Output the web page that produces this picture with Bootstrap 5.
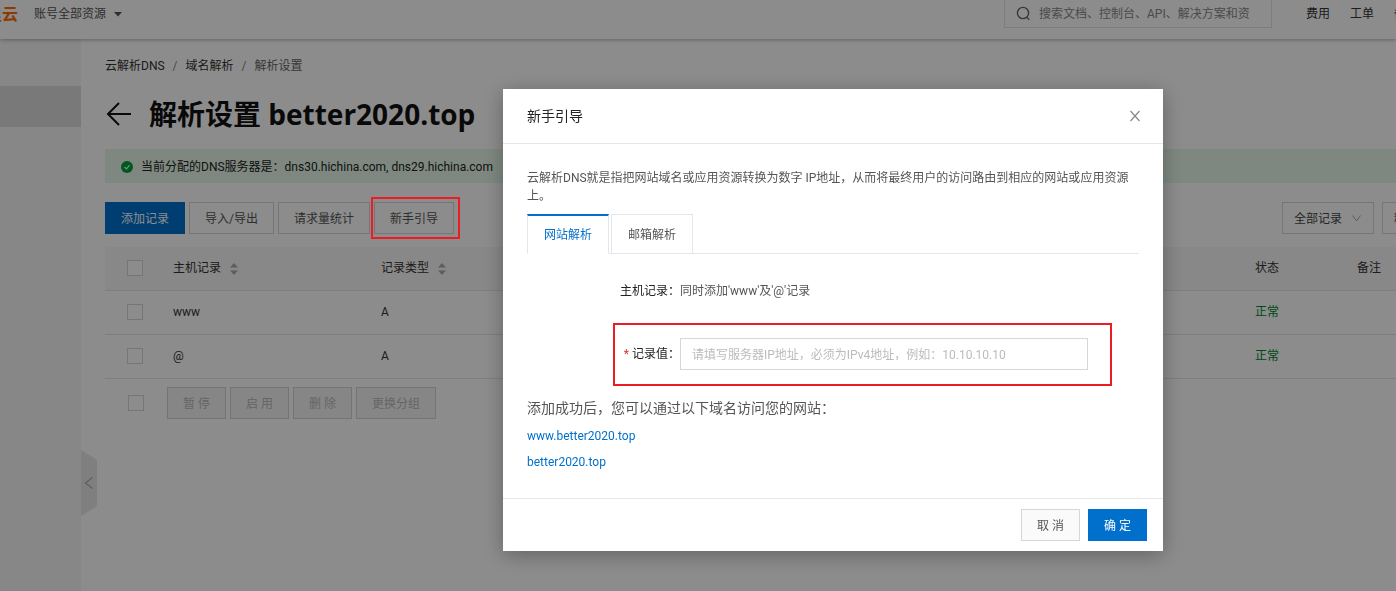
<!DOCTYPE html>
<html lang="zh-CN">
<head>
<meta charset="utf-8">
<meta name="viewport" content="width=device-width, initial-scale=1">
<title>解析设置 - 云解析DNS</title>
<link href="https://cdn.jsdelivr.net/npm/bootstrap@5.3.0/dist/css/bootstrap.min.css" rel="stylesheet">
<style>
  :root { --blue: #0070cc; --line: #e3e7ec; --edge: #d7d7d7; --frame: #ed1c24; }
  body { font-family: Roboto, "Noto Sans CJK SC", sans-serif; font-size: 12px; line-height: 18px; color: #333; overflow: hidden; }
  a { color: inherit; text-decoration: none; }

  .topbar { height: 39px; padding-bottom: 11px; box-shadow: 0 1px 4px rgba(0,0,0,.3); position: relative; z-index: 1; white-space: nowrap; }
  .brand { width: 18px; height: 27px; color: #ff6a00; font-size: 16px; line-height: 27px; font-weight: 700; overflow: hidden; }
  .account { color: #555; }
  .top-right { flex: 0 0 392px; overflow: hidden; }
  .searchbox { width: 268px; height: 28px; border: 1px solid #e4e4e4; border-top: 0; padding: 0 11px; }
  .searchbox input { border: 0; outline: 0; background: none; padding: 0; width: 100%; min-width: 0; }
  .searchbox input::placeholder { color: #888; }
  .top-links { padding-left: 34px; gap: 20px; }

  .sidebar { flex: 0 0 81px; background: #f6f6f6; padding-top: 47px; position: relative; min-height: calc(100vh - 39px); }
  .side-current { height: 41px; background: #dcdcdc; display: block; }
  .collapse-tab { position: absolute; left: 100%; top: 411px; border: 0; padding: 0; background: none; line-height: 0; }

  .content { padding: 18px 0 0 24px; min-width: 0; }
  .breadcrumb { --bs-breadcrumb-divider-color: #888; --bs-breadcrumb-item-active-color: #666; --bs-breadcrumb-item-padding-x: 8px; margin-bottom: 18px; }
  .page-title { font-family: "Open Sans", "Noto Sans CJK SC", sans-serif; font-size: 28px; line-height: 42px; font-weight: 700; color: #111; }
  .notice { height: 34px; background: #e6f8ea; padding: 2px 16px 0; margin: 14px 0 19px; color: #222; }

  .btn { --bs-btn-font-size: 12px; --bs-btn-line-height: 18px; --bs-btn-padding-x: 15px; --bs-btn-padding-y: 6px; --bs-btn-border-radius: 0; height: 32px; padding-top: 7px; white-space: nowrap; }
  .btn-plain { --bs-btn-color: #555; --bs-btn-border-color: var(--edge); --bs-btn-bg: #fafafa; --bs-btn-disabled-color: #b8b8b8; --bs-btn-disabled-border-color: #d3d3d3; --bs-btn-disabled-bg: #f5f5f5; --bs-btn-disabled-opacity: 1; }
  .toolbar .btn-plain { --bs-btn-bg: #fff; }
  .btn-main { --bs-btn-color: #fff; --bs-btn-bg: var(--blue); --bs-btn-border-color: var(--blue); --bs-btn-hover-color: #fff; --bs-btn-hover-bg: #0062b3; }
  .framed { position: relative; }
  .framed::after { content: ""; position: absolute; inset: -5px -6px -5px -3px; border: 2px solid var(--frame); z-index: 1060; pointer-events: none; }
  .filters { flex: 0 0 114px; overflow: hidden; gap: 8px; }
  .filters .form-select { flex: none; width: 92px; height: 32px; border-radius: 0; border-color: var(--edge); font-size: 12px; padding: 2px 24px 0 11px; color: #444; background-size: 9px; background-position: right 12px center;
    background-image: url("data:image/svg+xml,%3Csvg xmlns='http://www.w3.org/2000/svg' viewBox='0 0 9 9'%3E%3Cpath fill='none' stroke='%23aaa' d='M.5 1.5 4.5 7l4-5.5'/%3E%3C/svg%3E"); }

  .records { table-layout: fixed; margin: 13px 0 8px; color: #333; font-size: 12px; }
  .records > :not(caption) > * > * { height: 44px; padding: 0; vertical-align: middle; border-bottom: 1px solid #e6e6e6; white-space: nowrap; }
  .records > thead > tr > th { height: 43px; background: #f7f7f7; font-weight: 400; }
  .records th svg { margin-left: 6px; }
  .records .pick { width: 68px; padding-left: 22px; }
  .w-host { width: 208px; } .w-state { width: 102px; } .w-note { width: 39px; }
  .form-check-input { width: 16px; height: 16px; margin: 0; border-radius: 0 !important; border-color: var(--edge); display: block; }
  .records .ok { color: #00872b; }
  .batch { padding-left: 23px; }
  .batch .form-check-input { margin-right: 19px; }

  .mask { position: fixed; inset: 0; background: rgba(0,0,0,.45); z-index: 1050; }
  .guide { padding-left: 270px; overflow: hidden; }
  .guide .modal-dialog { max-width: 660px; margin: 89px auto 40px; }
  .guide .modal-content { border: 0; border-radius: 0; box-shadow: 0 4px 20px rgba(0,0,0,.3); color: #555; }
  .guide .modal-header { height: 55px; padding: 0 22px 0 24px; border-color: var(--line); border-radius: 0; }
  .guide .modal-title { font-size: 14px; line-height: 20px; font-weight: 400; color: #222; }
  .guide .modal-body { padding: 25px 24px 27px; }
  .guide .modal-footer { padding: 10px 16px; gap: 8px; border-color: var(--line); border-radius: 0; }
  .guide .modal-footer > * { margin: 0; }
  .close-x { border: 0; background: none; padding: 0; line-height: 0; }
  .nav-tabs { --bs-nav-tabs-border-color: var(--line); --bs-nav-tabs-border-radius: 0; gap: 2px; margin: 9px 0 28px; }
  .nav-tabs .nav-link { height: 40px; width: 82px; padding: 10px 0; line-height: 20px; border: 1px solid var(--line); border-bottom-color: transparent; color: #555; text-align: center; }
  .nav-tabs .nav-link.active { color: var(--blue); border-color: var(--line) var(--line) #fff; border-top: 2px solid var(--blue); padding-top: 9px; }
  .field-name { flex: 0 0 153px; text-align: right; color: #222; }
  .required-star { color: #d93026; }
  .value-row { width: 561px; margin-top: 38px; }
  .value-frame { position: relative; margin-bottom: 28px; }
  .value-frame::after { content: ""; position: absolute; inset: -15px 27px -16px 86px; border: 2px solid var(--frame); pointer-events: none; }
  .value-frame .form-control { height: 32px; font-size: 12px; border-radius: 0; border-color: var(--edge); padding: 2px 11px 0; }
  .value-frame .form-control::placeholder { color: #bbb; }
  .after-note { font-size: 14px; line-height: 20px; margin-bottom: 9px; }
  .site-link { color: var(--blue); display: block; }
</style>
</head>
<body>

<header class="topbar d-flex align-items-center bg-white">
  <a class="brand d-flex justify-content-end" href="#" aria-label="阿里云"><span>阿里云</span></a>
  <a class="account ms-3 d-flex align-items-center gap-2" href="#">账号全部资源
    <svg width="8" height="5" viewBox="0 0 8 5" aria-hidden="true"><path d="M0 0h8L4 4.5z" fill="#555"/></svg></a>
  <div class="top-right ms-auto d-flex align-items-center">
    <label class="searchbox d-flex align-items-center flex-shrink-0 gap-2">
      <svg class="flex-shrink-0" width="15" height="15" viewBox="0 0 15 15" fill="none" stroke="#666" stroke-width="1.4" aria-hidden="true"><circle cx="7" cy="7" r="5.6"/><path d="m10.7 10.9 2.6 3"/></svg>
      <input type="text" aria-label="搜索" placeholder="搜索文档、控制台、API、解决方案和资">
    </label>
    <nav class="top-links d-flex flex-shrink-0"><a href="#">费用</a><a href="#">工单</a><a href="#">备案</a></nav>
  </div>
</header>

<div class="d-flex">
  <aside class="sidebar">
    <a class="side-current" href="#" aria-label="域名解析"></a>
    <button class="collapse-tab" type="button" aria-label="收起">
      <svg width="16" height="66" viewBox="0 0 16 66"><path d="M0 0 14 8.500Q16 10 16 12V54Q16 56 14 57.500L0 66z" fill="#e8e8e8"/><path d="M11.500 27.500 4.500 33 11.500 38.500" fill="none" stroke="#aaa" stroke-width="1.2"/></svg>
    </button>
  </aside>

  <main class="content flex-grow-1">
    <nav aria-label="breadcrumb">
      <ol class="breadcrumb">
        <li class="breadcrumb-item"><a href="#">云解析DNS</a></li>
        <li class="breadcrumb-item"><a href="#">域名解析</a></li>
        <li class="breadcrumb-item active" aria-current="page">解析设置</li>
      </ol>
    </nav>
    <div class="d-flex align-items-center">
      <a href="#" aria-label="返回" class="d-flex"><svg width="28" height="26" viewBox="0 0 28 26" fill="none" stroke="#111" stroke-width="2"><path d="M26 13H3M14 2 3 13l11 11"/></svg></a>
      <h1 class="page-title ms-3 mb-0">解析设置 better2020.top</h1>
    </div>
    <div class="notice d-flex align-items-center gap-2" role="status">
      <svg width="12" height="12" viewBox="0 0 12 12" aria-hidden="true"><circle cx="6" cy="6" r="6" fill="#00a03a"/><path d="m3.500 6 2 2 3-3.800" fill="none" stroke="#fff" stroke-width="1.1"/></svg>
      <span>当前分配的DNS服务器是：dns30.hichina.com, dns29.hichina.com</span>
    </div>
    <div class="toolbar d-flex">
      <div class="d-flex gap-1">
        <button class="btn btn-main" type="button">添加记录</button>
        <button class="btn btn-plain" type="button">导入/导出</button>
        <button class="btn btn-plain" type="button">请求量统计</button>
        <div class="framed"><button class="btn btn-plain" type="button">新手引导</button></div>
      </div>
      <div class="filters ms-auto d-flex">
        <select class="form-select" aria-label="记录范围"><option>全部记录</option></select>
        <select class="form-select" aria-label="搜索方式"><option>精确搜索</option></select>
      </div>
    </div>

    <table class="table records">
      <thead>
        <tr>
          <th class="pick"><input class="form-check-input" type="checkbox" aria-label="全选"></th>
          <th class="w-host">主机记录 <svg width="8" height="14" viewBox="0 0 8 14" fill="#aaa" aria-hidden="true"><path d="M0 5.500 4 1l4 4.500zM0 8.500h8L4 13z"/></svg></th>
          <th>记录类型 <svg width="8" height="14" viewBox="0 0 8 14" fill="#aaa" aria-hidden="true"><path d="M0 5.500 4 1l4 4.500zM0 8.500h8L4 13z"/></svg></th>
          <th class="w-state">状态</th>
          <th class="w-note">备注</th>
        </tr>
      </thead>
      <tbody>
        <tr><td class="pick"><input class="form-check-input" type="checkbox" aria-label="选择 www"></td><td>www</td><td>A</td><td class="ok">正常</td><td></td></tr>
        <tr><td class="pick"><input class="form-check-input" type="checkbox" aria-label="选择 @"></td><td>@</td><td>A</td><td class="ok">正常</td><td></td></tr>
      </tbody>
    </table>
    <div class="batch d-flex align-items-center gap-1">
      <input class="form-check-input" type="checkbox" aria-label="全选">
      <button class="btn btn-plain" type="button" disabled>暂 停</button>
      <button class="btn btn-plain" type="button" disabled>启 用</button>
      <button class="btn btn-plain" type="button" disabled>删 除</button>
      <button class="btn btn-plain" type="button" disabled>更换分组</button>
    </div>
  </main>
</div>

<div class="mask"></div>

<div class="modal guide d-block" role="dialog" aria-labelledby="guide-title">
  <div class="modal-dialog">
    <div class="modal-content">
      <div class="modal-header">
        <h2 class="modal-title" id="guide-title">新手引导</h2>
        <button class="close-x" type="button" aria-label="关闭"><svg width="12" height="12" viewBox="0 0 12 12" stroke="#888" stroke-width="1.2"><path d="m1.500 1 9 10m0-10-9 10"/></svg></button>
      </div>
      <div class="modal-body">
        <p class="mb-0">云解析DNS就是指把网站域名或应用资源转换为数字 IP地址，从而将最终用户的访问路由到相应的网站或应用资源上。</p>
        <ul class="nav nav-tabs">
          <li class="nav-item"><a class="nav-link active" href="#">网站解析</a></li>
          <li class="nav-item"><a class="nav-link" href="#">邮箱解析</a></li>
        </ul>
        <div class="d-flex">
          <span class="field-name">主机记录：</span>
          <span>同时添加'www'及'@'记录</span>
        </div>
        <div class="value-frame">
          <div class="value-row d-flex align-items-center">
            <label class="field-name" for="ip"><span class="required-star">*</span> 记录值：</label>
            <input class="form-control" id="ip" type="text" placeholder="请填写服务器IP地址，必须为IPv4地址，例如：10.10.10.10">
          </div>
        </div>
        <p class="after-note">添加成功后，您可以通过以下域名访问您的网站：</p>
        <a class="site-link mb-2" href="#">www.better2020.top</a>
        <a class="site-link" href="#">better2020.top</a>
      </div>
      <div class="modal-footer">
        <button class="btn btn-plain" type="button">取 消</button>
        <button class="btn btn-main" type="button">确 定</button>
      </div>
    </div>
  </div>
</div>

<script src="https://cdn.jsdelivr.net/npm/bootstrap@5.3.0/dist/js/bootstrap.bundle.min.js"></script>
</body>
</html>
